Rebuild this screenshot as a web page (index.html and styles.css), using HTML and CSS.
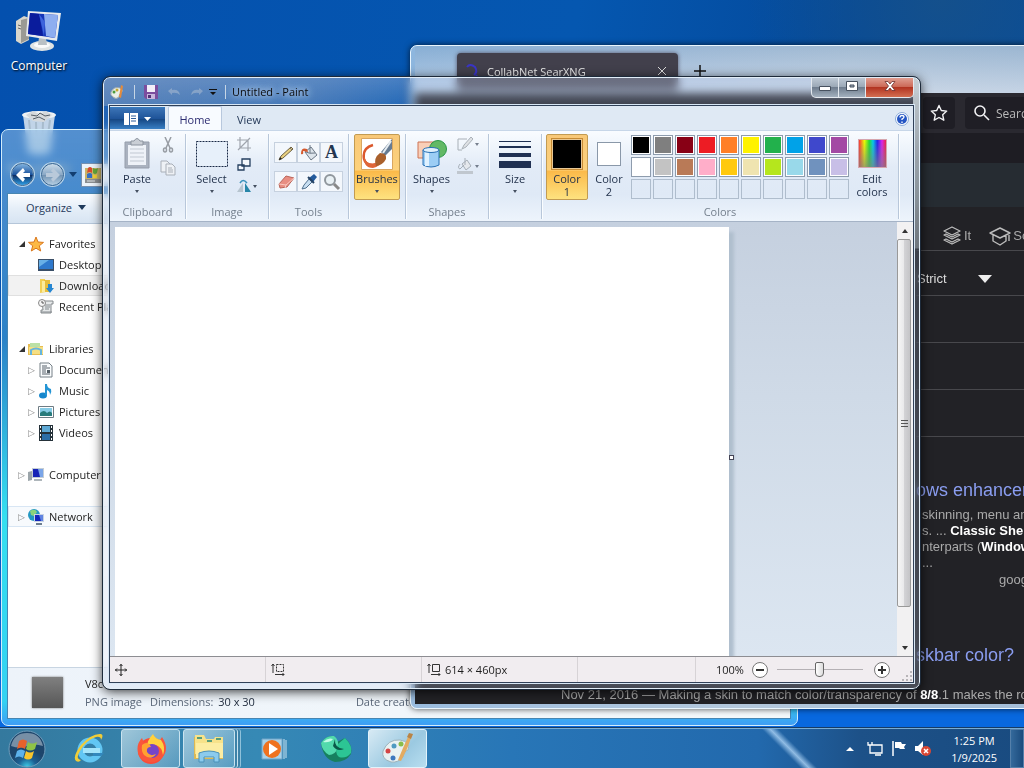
FILE: index.html
```html
<!DOCTYPE html>
<html lang="en">
<head>
    <meta charset="UTF-8">
    <meta name="viewport" content="width=device-width, initial-scale=1.0">
    <title>Desktop</title>
    <link rel="stylesheet" href="styles.css">
</head>
<body>

<main class="desktop">
    <div class="desktop-icons">
        <button class="desktop-icon">
            <svg width="48" height="44" viewBox="0 0 48 44"><path d="M1 12l8-5 5 2v22l-8 4-5-3z" fill="#d8d6cc"/><path d="M6 11v23l8-4V9z" fill="#9a9a94"/><path d="M3 16l3 1M3 19l3 1" stroke="#666"/><ellipse cx="27" cy="37" rx="12" ry="5" fill="#dfe3e3"/><ellipse cx="27" cy="36" rx="8" ry="3" fill="#fafafa"/><path d="M24 28l7 1 1 7h-9z" fill="#b9c0c4"/><path d="M13 2l33 2-4 28-31-5z" fill="#e8ebee"/><path d="M15 4l28 2-3 23-27-4z" fill="#1536b8"/><path d="M29 5l14 1-3 23-9-2z" fill="#8eaef0"/><path d="M15 4l9 1 4 22-15-2z" fill="#0a1c9c"/><path d="M24 5l6 8-1 14z" fill="#3d63dc"/></svg>
            <span>Computer</span>
        </button>
        <button class="desktop-icon">
            <svg width="40" height="46" viewBox="0 0 40 46"><path d="M4 5l32 0-5 38q-11 4-22 0z" fill="#d6e2ee" opacity=".9"/><path d="M10 10l3 30M17 12l1 31M24 12l-1 30M31 10l-4 30" stroke="#a8bccd" stroke-width="2"/><ellipse cx="20" cy="5" rx="17" ry="4" fill="#eef2f5"/><path d="M7 5l7-4 6 3 7-3 6 4-8 7-11-1z" fill="#d5d9dc"/><path d="M12 5l6 1 3-3 5 3 5-1M14 9l6-2 6 3" stroke="#555e66" fill="none"/></svg>
            <span>Recycle Bin</span>
        </button>
    </div>

    <section class="window explorer">
        <nav class="explorer-nav">
            <button class="round-button back" aria-label="Back"><svg width="16" height="14" viewBox="0 0 16 14"><path d="M8 0L1 7l7 7 2-3-2-2h7V5H8l2-2z" fill="#fff"/></svg></button>
            <button class="round-button forward" aria-label="Forward"><svg width="16" height="14" viewBox="0 0 16 14"><path d="M8 0l7 7-7 7-2-3 2-2H1V5h7L6 3z" fill="#b9c9da"/></svg></button>
            <button class="history" aria-label="Recent pages"><svg width="8" height="5" viewBox="0 0 8 5"><path d="M0 0h8L4 5z" fill="#123e70"/></svg></button>
            <div class="address">
                <svg width="18" height="18" viewBox="0 0 18 18"><path d="M1 2h16v14H1z" fill="#c9b468"/><path d="M4 2q2-2 4 0v5q-2-2-5 0z" fill="#d84b2c"/><path d="M9 2q3 2 5 0l-1 5q-2 2-4 0z" fill="#62a63c"/><path d="M3 8q3-2 5 0v4H3z" fill="#356fc4"/><path d="M9 8q2 2 4 0v4H9z" fill="#f1d236"/><path d="M1 13h16v4H1z" fill="#8b8f92"/><path d="M3 15h8" stroke="#dfe3e5"/></svg>
            </div>
        </nav>
        <div class="explorer-content">
            <div class="explorer-toolbar"><button>Organize <svg width="8" height="5" viewBox="0 0 8 5"><path d="M0 0h8L4 5z" fill="#1e395b"/></svg></button></div>
            <ul class="tree">
                <li class="root"><i class="open"></i><svg width="16" height="16" viewBox="0 0 16 16"><path d="M8 1l2 5 5.500.4-4.200 3.400 1.400 5.200L8 12.200 3.300 15l1.400-5.200L.5 6.400 6 6z" fill="#fdb944" stroke="#d9771c"/></svg>Favorites</li>
                <li><i></i><svg width="16" height="16" viewBox="0 0 16 16"><path d="M0 2h16v12H0z" fill="#3b4f67"/><path d="M1 3h14v9H1z" fill="#2f79cc"/><path d="M1 3h10L1 10z" fill="#69b0e6"/></svg>Desktop</li>
                <li class="selected"><i></i><svg width="16" height="16" viewBox="0 0 16 16"><path d="M2 1h5l1 13-6 1z" fill="#f2cf55"/><path d="M6 2h6v12H6z" fill="#e7bd3c"/><path d="M4 3h3v11H4z" fill="#fbeb9c"/><path d="M10 6h4v4h2l-4 5-4-5h2z" fill="#2686d2"/></svg>Downloads</li>
                <li><i></i><svg width="16" height="16" viewBox="0 0 16 16"><path d="M4 2h11v3h-2v9H3v-3h2z" fill="#e5e8e9" stroke="#84898c"/><path d="M7 6h5M7 8h5M7 10h4M3 13h11" stroke="#858b8f"/><circle cx="4" cy="4" r="3.500" fill="#f5f5f5" stroke="#888"/><path d="M4 2v2h2" stroke="#555" fill="none"/></svg>Recent Places</li>
                <li class="root gap"><i class="open"></i><svg width="16" height="16" viewBox="0 0 16 16"><path d="M0 3h5l1 2h9v9H0z" fill="#e7bd51"/><path d="M2 2h10v7H2z" fill="#bce1a5"/><path d="M1 6h14v7H1z" fill="#f6df83"/><path d="M3 14V9q5-3 10 0v5" fill="none" stroke="#66b5dd" stroke-width="2"/></svg>Libraries</li>
                <li><i class="closed"></i><svg width="16" height="16" viewBox="0 0 16 16"><path d="M2 1h9l3 3v11H2z" fill="#fafcfd" stroke="#768087"/><path d="M4 4h5M4 6h8M4 8h4M4 10h4M4 12h8" stroke="#56616a"/><path d="M9 8h3v3H9z" fill="#555f66"/></svg>Documents</li>
                <li><i class="closed"></i><svg width="16" height="16" viewBox="0 0 16 16"><ellipse cx="5" cy="12.500" rx="4" ry="3" fill="#1687cd"/><path d="M7 12V1h2q0 4 4 5 1 3-1 6 0-4-3-5v6" fill="#2495d5"/></svg>Music</li>
                <li><i class="closed"></i><svg width="16" height="16" viewBox="0 0 16 16"><path d="M.5 2.500h15v11H.5z" fill="#fff" stroke="#6e7c84"/><path d="M2 4h12v8H2z" fill="#88cce6"/><path d="M2 9q4-4 7 0 3-3 5 0v3H2z" fill="#287b7b"/></svg>Pictures</li>
                <li><i class="closed"></i><svg width="16" height="16" viewBox="0 0 16 16"><path d="M1 0h14v16H1z" fill="#253139"/><path d="M4 1h8v6H4z" fill="#5ea9d5"/><path d="M4 9h8v6H4z" fill="#2c6ea7"/><path d="M2.500 1v14M13.500 1v14" stroke="#fff" stroke-dasharray="2 2"/></svg>Videos</li>
                <li class="root gap"><i class="closed"></i><svg width="16" height="16" viewBox="0 0 16 16"><path d="M0 5l4-1v9l-4 1z" fill="#9ca5aa"/><path d="M4 1h12v10H4z" fill="#c4cdd5"/><path d="M5 2h10v8H5z" fill="#1724b6"/><path d="M10 2h5v8h-3z" fill="#7aa5e8"/><path d="M6 12h8v2H6z" fill="#aeb6bb"/></svg>Computer</li>
                <li class="root gap hover"><i class="closed"></i><svg width="16" height="16" viewBox="0 0 16 16"><circle cx="6" cy="6" r="6" fill="#2498c3"/><path d="M2 2q5-3 7 1L6 7 3 6z" fill="#8bd37b"/><path d="M6 5h10v8H6z" fill="#c8d3e3"/><path d="M7 6h8v6H7z" fill="#1426bd"/><path d="M11 6h4v6h-2z" fill="#6084e2"/><path d="M8 14h6v2H8z" fill="#6c7d90"/></svg>Network</li>
            </ul>
            <footer class="details">
                <div class="thumb"></div>
                <div class="details-text">
                    <div class="file-name">V8c</div>
                    <div class="file-meta"><span>PNG image</span><span>Dimensions: <b>30 x 30</b></span><span class="date">Date created:</span></div>
                </div>
            </footer>
        </div>
    </section>

    <section class="window firefox">
        <header class="tab-bar">
            <div class="browser-tab">
                <svg width="16" height="16" viewBox="0 0 16 16" fill="none" stroke="#3a35c6" stroke-width="2"><path d="M3 4q3-4 8 0 3 5-1 8M12 12l2 3"/></svg>
                <span>CollabNet SearXNG</span>
                <button aria-label="Close tab"><svg width="10" height="10" viewBox="0 0 10 10"><path d="M1 1l8 8M9 1L1 9" stroke="#ddd"/></svg></button>
            </div>
            <button class="new-tab" aria-label="New tab"><svg width="12" height="12" viewBox="0 0 12 12"><path d="M6 0v12M0 6h12" stroke="#111" stroke-width="1.500"/></svg></button>
        </header>
        <div class="nav-bar">
            <button class="star" aria-label="Bookmark"><svg width="18" height="18" viewBox="0 0 18 18"><path d="M9 1.500l2.300 5 5.400.6-4 3.700 1.100 5.400L9 13.500l-4.800 2.700 1.100-5.400-4-3.700 5.400-.6z" fill="none" stroke="#f2f2f4" stroke-width="1.400" stroke-linejoin="round"/></svg></button>
            <label class="search-box"><svg width="16" height="16" viewBox="0 0 16 16" fill="none" stroke="#f2f2f4" stroke-width="1.600"><circle cx="6" cy="6" r="5"/><path d="M10 10l5 5"/></svg><input type="text" placeholder="Search" aria-label="Search"></label>
        </div>
        <div class="bookmarks"></div>
        <div class="page-head"></div>
        <div class="page">
            <div class="categories">
                <a href="#"><svg width="20" height="20" viewBox="0 0 20 20" fill="none" stroke="#bbb" stroke-width="1.300" stroke-linejoin="round"><path d="M10 1l8 4-8 4-8-4zM2 9l2-1 6 3 6-3 2 1-8 4zM2 14l2-1 6 3 6-3 2 1-8 4z"/></svg>It</a>
                <a href="#"><svg width="22" height="20" viewBox="0 0 22 20" fill="none" stroke="#bbb" stroke-width="1.400" stroke-linejoin="round"><path d="M11 2l10 5-10 5L1 7zM4 9v6l7 4 6-4V9M20 7v8"/></svg>Science</a>
            </div>
            <div class="filter">Strict <svg width="14" height="8" viewBox="0 0 14 8"><path d="M0 0h14L7 8z" fill="#eee"/></svg></div>
            <div class="rule"></div>
            <div class="rule"></div>
            <div class="rule"></div>
            <article class="result first">
                <h3><a href="#">ows enhancement</a></h3>
                <p>skinning, menu and</p>
                <p>s. ... <b>Classic Shell</b></p>
                <p>nterparts (<b>Windows</b></p>
                <p>...</p>
                <p class="engine">google</p>
            </article>
            <article class="result">
                <h3><a href="#">skbar color?</a></h3>
                <p class="long">Nov 21, 2016 — Making a skin to match color/transparency of <b>8/8</b>.1 makes the root</p>
            </article>
        </div>
    </section>

    <section class="window paint">
        <header class="title-bar">
            <div class="quick-access">
                <svg width="16" height="16" viewBox="0 0 16 16"><path d="M2 8q3-6 9-4 4 2 1 5-2 1-2 4-3 3-6 0-3-2-2-5z" fill="#e9efe8" stroke="#9ba8ac"/><circle cx="5" cy="8" r="1.500" fill="#4b9b3e"/><circle cx="8" cy="6" r="1.500" fill="#c8a830"/><path d="M12 1l2 1-2 12-2-1z" fill="#e48b3c"/></svg>
                <i></i>
                <button class="save" aria-label="Save"><svg width="14" height="14" viewBox="0 0 14 14"><path d="M0 0h14v14H2l-2-2z" fill="#7c4e9e"/><path d="M3 0h8v7H3z" fill="#f2eef8"/><path d="M3 9h8v5H3z" fill="#c9b6dc"/><path d="M4 10h3v3H4z" fill="#533276"/></svg></button>
                <button class="faded" aria-label="Undo"><svg width="14" height="10" viewBox="0 0 14 10"><path d="M1 4l4-3v2q7-1 8 5-3-3-8-2v2z" fill="#b4c2d4"/></svg></button>
                <button class="faded" aria-label="Redo"><svg width="14" height="10" viewBox="0 0 14 10"><path d="M13 4L9 1v2Q2 2 1 8q3-3 8-2v2z" fill="#b4c2d4"/></svg></button>
                <button class="customize" aria-label="Customize toolbar"><svg width="8" height="8" viewBox="0 0 8 8"><path d="M0 1h8v1H0zM1 4h6L4 7z" fill="#111"/></svg></button>
                <i></i>
            </div>
            <h1>Untitled - Paint</h1>
            <div class="window-buttons">
                <button aria-label="Minimize"><svg width="12" height="12" viewBox="0 0 12 12"><path d="M.5 6.500h11v4H.5z" fill="#fff" stroke="#47515f"/></svg></button>
                <button aria-label="Maximize"><svg width="12" height="12" viewBox="0 0 12 12"><path d="M.5 1.500h11v9H.5zM4 5v2h4V5z" fill="#fff" fill-rule="evenodd" stroke="#47515f"/></svg></button>
                <button class="close" aria-label="Close"><svg width="12" height="12" viewBox="0 0 12 12"><path d="M1 1.500h3L6 4l2-2.500h3L7.500 6l3.500 4.500H8L6 8l-2 2.500H1L4.500 6z" fill="#fff" stroke="#6b2d2d" stroke-width=".8"/></svg></button>
            </div>
        </header>
        <div class="paint-content">
            <nav class="ribbon-tabs">
                <button class="file-menu" aria-label="Paint menu"><svg width="14" height="12" viewBox="0 0 14 12"><path d="M0 0h14v12H0z" fill="#fff"/><path d="M5.500 0v12" stroke="#2d5d9b"/><path d="M7 3h5M7 5.500h5M7 8h5" stroke="#2d5d9b"/></svg><svg width="7" height="4" viewBox="0 0 7 4"><path d="M0 0h7L3.500 4z" fill="#fff"/></svg></button>
                <button class="active">Home</button>
                <button>View</button>
                <button class="help" aria-label="Help"><svg width="14" height="14" viewBox="0 0 14 14"><circle cx="7" cy="7" r="6.500" fill="#fff" stroke="#8aaad8"/><circle cx="7" cy="7" r="5" fill="#2556c4"/><path d="M5 5.500q0-2 2-2t2 1.600q0 1-2 2V8M7 9.500v1.500" stroke="#fff" stroke-width="1.300" fill="none"/></svg></button>
            </nav>
            <div class="ribbon">
                <div class="group clipboard">
                    <div class="tools-row">
                        <button class="big"><span class="art"><svg width="26" height="31" viewBox="0 0 26 31"><path d="M1 4h24v26H1z" fill="#aab2bf" stroke="#959dab"/><path d="M4 7h18v20H4z" fill="#eef2f8"/><path d="M6 11h14M6 15h14M6 19h14M6 23h14" stroke="#c1c8d2"/><path d="M7 3h3q3-5 6 0h3v4H7z" fill="#c9ced5" stroke="#8b939e"/></svg></span>Paste<i class="drop"></i></button>
                        <div class="small-col">
                            <button aria-label="Cut"><svg width="14" height="16" viewBox="0 0 14 16" fill="none" stroke="#989da4" stroke-width="1.500"><path d="M4 0l5 11M10 0L5 11"/><ellipse cx="4" cy="13" rx="1.500" ry="2"/><ellipse cx="10" cy="13" rx="1.500" ry="2"/></svg></button>
                            <button aria-label="Copy"><svg width="16" height="16" viewBox="0 0 16 16" fill="#eef1f5" stroke="#a9afb8"><path d="M1 1h6l3 3v8H1z"/><path d="M6 4h6l3 3v8H6zM8 8h4M8 10h5M8 12h5"/></svg></button>
                        </div>
                    </div>
                    <span class="group-label">Clipboard</span>
                </div>
                <div class="group image">
                    <div class="tools-row">
                        <button class="big"><span class="art"><svg width="32" height="26" viewBox="0 0 32 26"><path d="M.5.500h31v25H.5z" fill="#e7f0fa" stroke="#182845" stroke-dasharray="2 1"/></svg></span>Select<i class="drop"></i></button>
                        <div class="small-col three">
                            <button aria-label="Crop"><svg width="14" height="14" viewBox="0 0 14 14" fill="none" stroke="#a0a5ad" stroke-width="1.200"><path d="M3 0v11h11M0 3h11v11M1 13L13 1"/></svg></button>
                            <button aria-label="Resize"><svg width="14" height="14" viewBox="0 0 14 14" fill="#f4f8fc" stroke="#253f5f" stroke-width="1.300"><path d="M5 1h8v7H5zM1 7h6v5H1z"/></svg></button>
                            <button class="rotate" aria-label="Rotate"><svg width="14" height="14" viewBox="0 0 14 14"><path d="M6 4v9H0z" fill="#b6c4cf"/><path d="M8 4l6 9H8z" fill="#2685a8"/><path d="M3 4q3-5 7 0" fill="none" stroke="#3a91bb" stroke-width="1.500"/></svg><i class="drop"></i></button>
                        </div>
                    </div>
                    <span class="group-label">Image</span>
                </div>
                <div class="group tools">
                    <div class="tool-grid">
                        <button aria-label="Pencil"><svg width="18" height="18" viewBox="0 0 18 18"><path d="M2 16l2-4 10-9 2 2-10 9z" fill="#e9d080" stroke="#6d6144"/><path d="M2 16l1-3 2 2z" fill="#222"/><path d="M13 4l2 2" stroke="#777"/></svg></button>
                        <button aria-label="Fill"><svg width="18" height="18" viewBox="0 0 18 18"><path d="M5 8l6-5 6 8-6 5z" fill="#dce4eb" stroke="#6c7886"/><path d="M10 9V1M6 8q3 2 9 1" fill="none" stroke="#6c7886"/><path d="M7 5q-6-2-6 5 3 1 2-3l5 1z" fill="#d5592d"/></svg></button>
                        <button class="text-tool" aria-label="Text">A</button>
                        <button aria-label="Eraser"><svg width="18" height="18" viewBox="0 0 18 18"><path d="M2 11l7-8 8 2-7 9-7 1z" fill="#e88e82" stroke="#b96459"/><path d="M2 11l7 1 8-7M9 12l-1 3" fill="none" stroke="#fac9bf"/></svg></button>
                        <button aria-label="Color picker"><svg width="18" height="18" viewBox="0 0 18 18"><path d="M2 16l2-4 5-6 3 3-6 6z" fill="#c7def1" stroke="#51718f"/><path d="M9 5l5-4 3 3-4 5z" fill="#245b9c"/><path d="M8 4l6 6" stroke="#244264" stroke-width="2"/></svg></button>
                        <button aria-label="Magnifier"><svg width="18" height="18" viewBox="0 0 18 18"><circle cx="7" cy="7" r="5" fill="#e9f1f5" stroke="#90979d" stroke-width="2"/><path d="M11 11l5 5" stroke="#888" stroke-width="3"/></svg></button>
                    </div>
                    <span class="group-label">Tools</span>
                </div>
                <div class="group brushes">
                    <button class="big selected"><span class="art"><svg width="32" height="32" viewBox="0 0 32 32"><path d="M.5.500h31v31H.5z" fill="#fff" stroke="#d9a661"/><path d="M12 7Q1 10 3 21q2 8 14 5" fill="none" stroke="#db582c" stroke-width="2.500"/><path d="M3 18q2 8 9 8l10-5q-3 8-10 9Q2 30 3 18" fill="#df6639"/><path d="M31 1v10l-7 7-4-4z" fill="#667b92"/><path d="M30 3l-8 12" stroke="#e7edf2" stroke-width="2"/><path d="M19 15q7 0 6 6-3 6-10 7-3-8 4-13z" fill="#a9602c"/></svg></span>Brushes<i class="drop"></i></button>
                </div>
                <div class="group shapes">
                    <div class="tools-row">
                        <button class="big"><span class="art"><svg width="32" height="30" viewBox="0 0 32 30"><path d="M2 3h17v16H2z" fill="#f9cfb8" stroke="#ce7555"/><circle cx="22" cy="10" r="8.500" fill="#62b965" stroke="#299647"/><path d="M7 11v15q8 4 16 0V11z" fill="#9ccdf5" stroke="#2970b4"/><path d="M11 13v14" stroke="#dff1ff" stroke-width="4"/><ellipse cx="15" cy="11" rx="8" ry="2.500" fill="#dff0fc" stroke="#2970b4"/></svg></span>Shapes<i class="drop"></i></button>
                        <div class="small-col">
                            <button class="dim" aria-label="Outline"><svg width="16" height="14" viewBox="0 0 16 14"><path d="M1 2h9M1 2v11h4" fill="none" stroke="#8b939b"/><path d="M5 12l2-4 7-8 2 2-7 8z" fill="#d6d9db" stroke="#8b939b"/></svg><i class="drop"></i></button>
                            <button class="dim" aria-label="Fill style"><svg width="16" height="16" viewBox="0 0 16 16"><path d="M5 6l5-4 4 6-5 4z" fill="#e5e7e9" stroke="#8b939b"/><path d="M3 6q-3 4 0 5l4-4M8 7V0" fill="none" stroke="#8b939b"/><path d="M0 13h16v3H0z" fill="#b2b8be"/></svg><i class="drop"></i></button>
                        </div>
                    </div>
                    <span class="group-label">Shapes</span>
                </div>
                <div class="group size">
                    <button class="big"><span class="art"><svg width="32" height="28" viewBox="0 0 32 28"><path d="M0 1h32v1H0zM0 6h32v2H0zM0 13h32v4H0zM0 21h32v7H0z" fill="#203153"/></svg></span>Size<i class="drop"></i></button>
                </div>
                <div class="group colors">
                    <div class="tools-row">
                        <button class="big color-choice selected"><span class="art"><b class="swatch-one"></b></span><span>Color<br>1</span></button>
                        <button class="big color-choice"><span class="art"><b class="swatch-two"></b></span><span>Color<br>2</span></button>
                        <div class="palette">
                            <button class="c-black" aria-label="Black"></button><button class="c-gray" aria-label="Gray"></button><button class="c-darkred" aria-label="Dark red"></button><button class="c-red" aria-label="Red"></button><button class="c-orange" aria-label="Orange"></button><button class="c-yellow" aria-label="Yellow"></button><button class="c-green" aria-label="Green"></button><button class="c-turquoise" aria-label="Turquoise"></button><button class="c-indigo" aria-label="Indigo"></button><button class="c-purple" aria-label="Purple"></button>
                            <button class="c-white" aria-label="White"></button><button class="c-lightgray" aria-label="Light gray"></button><button class="c-brown" aria-label="Brown"></button><button class="c-rose" aria-label="Rose"></button><button class="c-gold" aria-label="Gold"></button><button class="c-lightyellow" aria-label="Light yellow"></button><button class="c-lime" aria-label="Lime"></button><button class="c-lightblue" aria-label="Light turquoise"></button><button class="c-bluegray" aria-label="Blue gray"></button><button class="c-lavender" aria-label="Lavender"></button>
                            <button class="empty" aria-label="Custom 1"></button><button class="empty" aria-label="Custom 2"></button><button class="empty" aria-label="Custom 3"></button><button class="empty" aria-label="Custom 4"></button><button class="empty" aria-label="Custom 5"></button><button class="empty" aria-label="Custom 6"></button><button class="empty" aria-label="Custom 7"></button><button class="empty" aria-label="Custom 8"></button><button class="empty" aria-label="Custom 9"></button><button class="empty" aria-label="Custom 10"></button>
                        </div>
                        <button class="big edit-colors"><span class="art"><b class="rainbow"></b></span><span>Edit<br>colors</span></button>
                    </div>
                    <span class="group-label">Colors</span>
                </div>
            </div>
            <div class="workspace">
                <div class="canvas-area"><div class="canvas"><span class="handle"></span></div></div>
                <div class="scrollbar">
                    <button aria-label="Scroll up"><svg width="6" height="4" viewBox="0 0 6 4"><path d="M0 4h6L3 0z" fill="#333"/></svg></button>
                    <div class="scroll-thumb"><i></i><i></i><i></i></div>
                    <button aria-label="Scroll down"><svg width="6" height="4" viewBox="0 0 6 4"><path d="M0 0h6L3 4z" fill="#333"/></svg></button>
                </div>
            </div>
            <footer class="status-bar">
                <div><svg width="12" height="12" viewBox="0 0 12 12" fill="none" stroke="#222"><path d="M6 0v12M0 6h12M4.500 2L6 .5 7.500 2M4.500 10L6 11.500 7.500 10M2 4.500L.5 6 2 7.500M10 4.500L11.500 6 10 7.500"/></svg></div>
                <div><svg width="14" height="13" viewBox="0 0 14 13" fill="none" stroke="#333"><path d="M2 10V1M.5 3L2 1l1.500 2M4 11.500h9M11.500 10l1.500 1.500-1.500 1.500"/><path d="M5.500 1.500h7v7h-7z" stroke-dasharray="2 1"/></svg></div>
                <div><svg width="14" height="13" viewBox="0 0 14 13" fill="none" stroke="#333"><path d="M2 10V1M.5 3L2 1l1.500 2M4 11.500h9M11.500 10l1.500 1.500-1.500 1.500M5.500 1.500h7v7h-7z"/></svg>614 × 460px</div>
                <div></div>
                <div class="zoom">100%
                    <button aria-label="Zoom out"><svg width="16" height="16" viewBox="0 0 16 16" fill="#fff" stroke="#777"><circle cx="8" cy="8" r="7.500"/><path d="M4 8h8" stroke="#333" stroke-width="2"/></svg></button>
                    <input type="range" min="0" max="100" value="50" aria-label="Zoom">
                    <button aria-label="Zoom in"><svg width="16" height="16" viewBox="0 0 16 16" fill="#fff" stroke="#777"><circle cx="8" cy="8" r="7.500"/><path d="M4 8h8M8 4v8" stroke="#333" stroke-width="2"/></svg></button>
                    <svg class="grip" width="12" height="12" viewBox="0 0 12 12" fill="#b8b5b8"><path d="M9 1h2v2H9zM5 5h2v2H5zM9 5h2v2H9zM1 9h2v2H1zM5 9h2v2H5zM9 9h2v2H9z"/></svg>
                </div>
            </footer>
        </div>
    </section>
</main>

<footer class="taskbar">
    <button class="start" aria-label="Start"><svg width="38" height="38" viewBox="0 0 38 38"><defs><radialGradient id="orb" cx=".5" cy="1"><stop offset="0" stop-color="#3ed0ea"/><stop offset=".5" stop-color="#1c6093"/><stop offset="1" stop-color="#1d456b"/></radialGradient></defs><circle cx="19" cy="19" r="18" fill="url(#orb)" stroke="#6f9dbb"/><path d="M3 16Q6 3 19 3t16 13q-9-3-16 0t-16 0" fill="#fff" opacity=".4"/><path d="M11 11q4-3 8 0l-2 8q-4-3-8 0z" fill="#e8622c"/><path d="M20 12q4 3 9 0l-2 7q-5 3-9 0z" fill="#8fc347"/><path d="M9 21q4-3 8 0l-2 7q-4-3-8 0z" fill="#5db1eb"/><path d="M18 21q4 3 8 0l-2 7q-4 3-8 0z" fill="#fac52c"/></svg></button>
    <button class="task" aria-label="Internet Explorer"><svg width="32" height="32" viewBox="0 0 32 32"><circle cx="17" cy="17" r="9.500" fill="none" stroke="#62c6f3" stroke-width="6"/><path d="M10 15h17v5H10z" fill="#a4e4fa"/><path d="M20 20h11l-3 3h-8z" fill="#3388bd"/><path d="M3 28Q-1 24 8 12 19 0 28 1q3 1 0 6 0-4-5-3Q13 7 7 18 2 26 8 27q-2 3-5 1" fill="#f0cd38"/></svg></button>
    <button class="task running" aria-label="Firefox"><svg width="32" height="32" viewBox="0 0 32 32"><circle cx="16" cy="18" r="13" fill="#fb4b38"/><path d="M3 20Q1 11 7 5l2 5q5-2 9-8 2 4 7 5l2-3q8 12 0 21-8 7-17 3-6-3-7-8" fill="#f9563c"/><path d="M18 1q2 5 8 6 5 7 2 15-1-8-7-10-7-2-9 3Q12 7 18 1" fill="#ffd23e"/><circle cx="17" cy="18" r="7" fill="#7646c7"/><path d="M7 12q6-5 9 2-5 0-4 5 3 5 9 2-5 7-12 1-3-4-2-10" fill="#ffa130"/></svg></button>
    <button class="task running stacked" aria-label="Explorer"><svg width="34" height="30" viewBox="0 0 34 30"><path d="M2 3h9l2 2h18v20H2z" fill="#dcb854"/><path d="M3 1h9l2 4h8l1-2h8v17H3z" fill="#f7e28a"/><path d="M4 9h27v15H4z" fill="#fceda3"/><path d="M5 4h5M15 7h5M24 5h5" stroke="#579d7b" stroke-width="2"/><path d="M7 28v-9q10-4 20 0v9h-5v-5H12v5z" fill="#8ccbed" stroke="#4b91b9"/></svg></button>
    <button class="task" aria-label="Media Player"><svg width="26" height="26" viewBox="0 0 26 26"><path d="M1 3h20v20H1z" fill="#a7d2ea" stroke="#72a4c6"/><path d="M23 3v20M25 4v18" stroke="#c9e2f1"/><circle cx="11" cy="13" r="9" fill="#ef721f"/><path d="M8 7l9 6-9 6z" fill="#fff"/></svg></button>
    <button class="task" aria-label="Shell"><svg width="34" height="30" viewBox="0 0 34 30"><path d="M2 9Q7 1 15 2l3 6 8-4q8 7 6 16-5 8-16 8Q4 25 2 9" fill="#17805f"/><path d="M2 9Q7 1 15 2q5 3 4 12-3 7-9 7Q3 17 2 9" fill="#52d9ac"/><path d="M4 8q5-5 10-3-3 4-10 3" fill="#c2fae6"/><path d="M19 10l7-6q8 8 6 15-5 6-12 4-5-4-1-13" fill="#2cc594"/><path d="M16 5q-1 9 9 10-7 3-11-3z" fill="#0b5849"/></svg></button>
    <button class="task active" aria-label="Paint"><svg width="34" height="32" viewBox="0 0 34 32"><path d="M2 18Q7 6 19 7q11 2 8 10-4 1-5 7-5 6-12 5Q0 26 2 18" fill="#e8f1f2" stroke="#9eb3bb"/><circle cx="7" cy="18" r="2.500" fill="#d44545"/><circle cx="13" cy="13" r="2.500" fill="#4e9ac1"/><circle cx="20" cy="11" r="2.500" fill="#8bbd49"/><circle cx="12" cy="25" r="2.500" fill="#3c77be"/><path d="M27 4l3 1-4 11-6 12-3-1 5-12z" fill="#e3ab61"/><path d="M26 4l4 2 2-5-4-1z" fill="#b98446"/></svg></button>
    <div class="tray">
        <button aria-label="Show hidden icons"><svg width="8" height="4" viewBox="0 0 8 4"><path d="M0 4h8L4 0z" fill="#fff"/></svg></button>
        <button class="network" aria-label="Network"><svg width="16" height="14" viewBox="0 0 16 14" fill="none" stroke="#fff" stroke-width="1.300"><path d="M5 3h10v8H6M8 13h6M1 0v3h4V0M3 3v8h3"/></svg></button>
        <button aria-label="Action Center"><svg width="14" height="15" viewBox="0 0 14 15"><path d="M1 0v15" stroke="#fff" stroke-width="1.500"/><path d="M3 1h6l1 2h4l-2 3 1 2H8L7 7H3z" fill="#fff"/></svg></button>
        <button aria-label="Volume"><svg width="16" height="16" viewBox="0 0 16 16"><path d="M0 5h3l5-5v14L3 10H0z" fill="#fff"/><circle cx="11" cy="10" r="5" fill="#d94734"/><path d="M9 8l4 4M13 8l-4 4" stroke="#fff" stroke-width="1.500"/></svg></button>
        <button class="clock">1:25 PM<br>1/9/2025</button>
        <button class="show-desktop" aria-label="Show desktop"></button>
    </div>
</footer>

</body>
</html>
```

FILE: styles.css
```css
* {
    box-sizing: border-box;
}

body {
    margin: 0;
    height: 100vh;
    display: flex;
    flex-direction: column;
    overflow: hidden;
    font-family: "Open Sans", "Noto Sans", sans-serif;
    font-size: 11px;
    line-height: 13px;
    color: #1e1e1e;
    background: radial-gradient(circle at 92% 0, #14508c 0, rgba(20, 80, 140, 0) 16%), linear-gradient(100deg, #0450ae 0, #0557b0 50%, #04499a 75%, #0b4f98 100%);
}

button {
    font: inherit;
    color: inherit;
    padding: 0;
    border: none;
    background: none;
}

svg {
    display: block;
    flex: none;
}

.desktop {
    flex: 1;
    position: relative;
    overflow: hidden;
    background: linear-gradient(rgba(8, 104, 222, 0) 60%, #0868de 95%);
}

.desktop-icons {
    display: flex;
    flex-direction: column;
    align-items: flex-start;
    gap: 38px;
    padding: 9px 0 0 2px;
}

.desktop-icon {
    width: 74px;
    display: flex;
    flex-direction: column;
    align-items: center;
    gap: 6px;
    color: #fff;
    text-shadow: 1px 1px 2px #000;
}

.desktop-icon span {
    font-size: 12px;
}

/* Windows */
.window {
    position: absolute;
    display: flex;
    flex-direction: column;
    border-radius: 7px;
    overflow: hidden;
    backdrop-filter: blur(4px);
}

.explorer {
    left: 1px;
    top: 129px;
    bottom: 2px;
    width: 797px;
    padding: 0 6px 6px 5px;
    border: 1px solid #d3edfb;
    background: linear-gradient(rgba(150, 195, 235, 0.55), rgba(60, 150, 210, 0.7) 35%, #35dff0 65%, #33d2f2 96%, #3e9df4 100%);
}

.explorer-nav {
    height: 63px;
    display: flex;
    align-items: center;
    gap: 4px;
    padding: 26px 0 0 2px;
}

.round-button {
    width: 25px;
    height: 25px;
    border-radius: 50%;
    border: 2px solid #b8d4ea;
    outline: 1px solid #33608d;
    outline-offset: -2px;
    display: flex;
    align-items: center;
    justify-content: center;
    margin-left: 1px;
}

.back {
    background: linear-gradient(#7fb2e0, #1b539c 50%, #0b285d 52%, #2c9de4);
}

.forward {
    background: linear-gradient(#cbdcea, #8ba9c6 50%, #6f90b0 52%, #b5cfe3);
}

.address {
    flex: 1;
    height: 24px;
    padding: 2px;
    border: 1px solid #7590b0;
    background: #ecf3fa;
}

.explorer-content {
    flex: 1;
    display: flex;
    flex-direction: column;
    background: #fff;
    border: 1px solid #4785b1;
}

.explorer-toolbar {
    height: 30px;
    display: flex;
    align-items: center;
    padding: 0 0 2px 18px;
    background: linear-gradient(#fbfdff, #e5eef8 50%, #d7e4f2);
    border-bottom: 1px solid #b5c6d9;
    color: #1e395b;
}

.explorer-toolbar button {
    display: flex;
    align-items: center;
    gap: 6px;
}

.tree {
    flex: 1;
    list-style: none;
    margin: 0;
    padding: 9px 0 0;
}

.tree li {
    width: 180px;
    height: 21px;
    display: flex;
    align-items: center;
    padding-left: 18px;
    border: 1px solid transparent;
    white-space: nowrap;
}

.tree li svg {
    margin: 0 5px 0 2px;
}

.tree li.root {
    padding-left: 8px;
}

.tree li.gap {
    margin-top: 21px;
}

.tree li i {
    width: 9px;
    display: flex;
    justify-content: center;
}

.tree li .closed::before {
    content: "▷";
    font: 9px "DejaVu Sans", sans-serif;
    color: #888;
}

.tree li .open::before {
    content: "";
    border-left: 6px solid transparent;
    border-bottom: 6px solid #333;
}

.tree li.selected {
    border-color: #e0e0e0;
    background: #f2f2f2;
}

.tree li.hover {
    border-color: #d8e6f4;
    background: #f7fafd;
}

.details {
    height: 51px;
    display: flex;
    align-items: center;
    gap: 22px;
    padding-left: 24px;
    border-top: 1px solid #c8d5e2;
    background: linear-gradient(90deg, #edf3fa, #f4f9fb);
}

.thumb {
    width: 31px;
    height: 31px;
    margin-bottom: 2px;
    background: linear-gradient(#808080, #565656);
    box-shadow: 0 0 2px #777;
}

.details-text {
    display: flex;
    flex-direction: column;
    gap: 5px;
    padding-bottom: 1px;
}

.file-meta {
    display: flex;
    gap: 8px;
    color: #5a6779;
    white-space: nowrap;
}

.file-meta b {
    font-weight: 400;
    color: #1e2a3c;
    margin-left: 2px;
}

.file-meta .date {
    margin-left: 93px;
}

/* Browser */
.firefox {
    left: 410px;
    right: -12px;
    top: 45px;
    bottom: 19px;
    padding: 0 4px 4px;
    border: 1px solid #e9f5fd;
    background: linear-gradient(100deg, #8db6de, #a5c1df 30%, #b4c8dc 60%, #a3bdd8);
    box-shadow: 0 0 6px rgba(0, 0, 0, 0.7);
}

.tab-bar {
    height: 47px;
    display: flex;
    align-items: flex-start;
    gap: 16px;
    padding: 7px 0 0 42px;
    background: linear-gradient(rgba(120, 155, 190, 0.3), rgba(225, 230, 240, 0.5));
}

.browser-tab {
    width: 221px;
    height: 36px;
    display: flex;
    align-items: center;
    gap: 7px;
    padding: 0 11px 0 7px;
    border-radius: 4px;
    background: #42404c;
    color: #eee;
    box-shadow: 0 0 4px #55546a;
}

.browser-tab span {
    flex: 1;
}

.new-tab {
    height: 36px;
}

.nav-bar {
    height: 40px;
    display: flex;
    align-items: center;
    justify-content: flex-end;
    gap: 10px;
    background: #2a2930;
}

.star {
    width: 32px;
    height: 32px;
    display: flex;
    align-items: center;
    justify-content: center;
    background: #1f1e25;
    border-radius: 4px;
}

.search-box {
    width: 66px;
    height: 32px;
    display: flex;
    align-items: center;
    gap: 6px;
    padding-left: 9px;
    background: #1f1e25;
    border-radius: 4px;
}

.search-box input {
    width: 60px;
    border: none;
    background: none;
    font: inherit;
    font-size: 12px;
    padding: 0;
}

.search-box input::placeholder {
    color: #bbb;
}

.bookmarks {
    height: 30px;
    background: #1e1d23;
}

.page-head {
    height: 44px;
    background: #262c32;
}

.page {
    flex: 1;
    padding-left: 501px;
    overflow: hidden;
    background: #222226;
    font-family: "Liberation Sans", Arial, sans-serif;
    font-size: 13px;
    line-height: 16px;
    color: #aaa;
    white-space: nowrap;
}

.page a {
    color: inherit;
    text-decoration: none;
}

.categories,
.filter,
.rule {
    border-bottom: 1px solid #48484c;
}

.categories {
    height: 44px;
    display: flex;
    align-items: center;
    gap: 18px;
    padding: 14px 0 0 26px;
}

.categories a {
    display: flex;
    align-items: center;
    gap: 2px;
}

.filter {
    height: 45px;
    display: flex;
    align-items: center;
    gap: 31px;
    padding: 12px 0 0 1px;
    color: #ddd;
}

.rule {
    height: 47px;
}

.result h3 {
    margin: 0 0 5px;
    font-size: 18px;
    font-weight: 400;
    line-height: 24px;
    color: #8a9df0;
}

.result p {
    margin: 0 0 0 6px;
}

.result b {
    color: #fff;
}

.result.first {
    height: 206px;
    padding-top: 41px;
}

.result p.engine {
    padding-top: 1px;
    margin-left: 83px;
}

.result p.long {
    margin: 20px 0 0 -355px;
}

/* Paint */
.paint {
    left: 103px;
    top: 77px;
    bottom: 39px;
    width: 817px;
    padding: 0 5px 5px;
    border: 1px solid #e2edf7;
    outline: 1px solid #1d2a3a;
    background: linear-gradient(#c3ccd2, rgba(160, 170, 175, 0.5) 170px, transparent 171px) right / 6px 100% no-repeat, linear-gradient(90deg, rgba(150, 165, 190, 0.45), rgba(150, 165, 190, 0.3) 210px, transparent 310px) 0 0 / 100% 28px no-repeat, linear-gradient(rgba(190, 205, 235, 0.35), rgba(150, 175, 210, 0.2) 28px, rgba(190, 205, 235, 0.25));
    box-shadow: 0 2px 12px rgba(0, 0, 0, 0.85);
}

.title-bar {
    height: 27px;
    flex: none;
    display: flex;
    align-items: center;
    gap: 3px;
}

.quick-access {
    display: flex;
    align-items: center;
    gap: 9px;
}

.quick-access i {
    width: 1px;
    height: 14px;
    background: #c6d5e5;
}

.quick-access .faded {
    opacity: 0.5;
}

.quick-access .customize {
    margin: 0 -1px 0 -4px;
}

.title-bar h1 {
    flex: 1;
    margin: 0;
    padding-left: 3px;
    font-size: 11px;
    font-weight: 400;
    color: #0c0c0c;
    text-shadow: 0 0 6px #d8e5f5, 0 0 10px #d8e5f5;
}

.window-buttons {
    align-self: flex-start;
    height: 20px;
    display: flex;
    border: 1px solid #e4e9ef;
    border-top: none;
    border-radius: 0 0 5px 5px;
    overflow: hidden;
    background: linear-gradient(#bdc8d4, #9ca9b7 45%, #6f7d8e 50%, #a3b0be);
}

.window-buttons button {
    width: 27px;
    display: flex;
    align-items: center;
    justify-content: center;
    padding-bottom: 3px;
    border-right: 1px solid #e4e9ef;
}

.window-buttons .close {
    width: 47px;
    border: none;
    background: linear-gradient(#e09e91, #cc6a58 45%, #b23421 50%, #d36e51);
}

.paint-content {
    flex: 1;
    display: flex;
    flex-direction: column;
    border: 1px solid #304057;
    outline: 1px solid #d8e7f5;
    background: #dfe9f5;
    overflow: hidden;
}

.ribbon-tabs {
    height: 24px;
    flex: none;
    display: flex;
    align-items: stretch;
    background: #dfe9f4;
    color: #1f3454;
}

.ribbon-tabs button {
    width: 54px;
    padding-top: 2px;
    border: 1px solid transparent;
    border-bottom: none;
}

.ribbon-tabs .file-menu {
    width: 55px;
    display: flex;
    align-items: center;
    justify-content: center;
    gap: 6px;
    padding: 0;
    margin: 1px 3px 1px 0;
    background: linear-gradient(#3b73b5, #1f5499 50%, #154581 52%, #387fc4);
}

.ribbon-tabs .active {
    background: #f8fbff;
    border-color: #b8c8dd;
    color: #2b2b71;
    border-radius: 2px 2px 0 0;
}

.ribbon-tabs .help {
    width: 19px;
    padding: 0;
    margin-left: auto;
}

.ribbon {
    height: 92px;
    flex: none;
    display: flex;
    padding: 3px 0 2px;
    background: linear-gradient(#f9fcff, #e2ebf7 40%, #dfe9f6 70%, #edf4fc);
    border-top: 1px solid #c7d6e8;
    border-bottom: 1px solid #a5b3c6;
}

.group {
    display: flex;
    flex-direction: column;
    align-items: center;
    justify-content: space-between;
    border-right: 1px solid #b8c7da;
    box-shadow: 1px 0 #fafdff;
}

.group-label {
    color: #75808e;
    line-height: 14px;
}

.clipboard {
    width: 76px;
}

.image,
.shapes {
    width: 83px;
}

.tools {
    width: 80px;
}

.brushes {
    width: 57px;
}

.size {
    width: 53px;
}

.colors {
    width: 357px;
}

.tools-row {
    display: flex;
    gap: 2px;
}

.clipboard .tools-row {
    gap: 0;
    padding-right: 5px;
}

.image .tools-row {
    padding-right: 9px;
}

.shapes .tools-row {
    padding-right: 7px;
}

.big {
    min-width: 46px;
    height: 66px;
    display: flex;
    flex-direction: column;
    align-items: center;
    border: 1px solid transparent;
    border-radius: 2px;
    color: #1e2e48;
}

.big .art {
    height: 37px;
    display: flex;
    align-items: center;
}

.drop {
    margin: 5px 0;
    border: 2px solid transparent;
    border-top: 3px solid #444f60;
    border-bottom: 0;
}

.big.selected {
    border-color: #c29b52;
    background: linear-gradient(#f8c878, #fdd27c 55%, #fbb949 56%, #fee27f);
}

.small-col {
    height: 64px;
    display: flex;
    flex-direction: column;
    align-items: center;
    gap: 7px;
    padding-top: 3px;
}

.small-col.three {
    align-items: flex-start;
}

.small-col button {
    display: flex;
    align-items: center;
    gap: 2px;
}

.dim {
    opacity: 0.7;
}

.tool-grid {
    display: grid;
    grid-template-columns: repeat(3, 23px);
    grid-auto-rows: 21px;
    row-gap: 8px;
    padding-top: 8px;
}

.tool-grid button {
    display: flex;
    align-items: center;
    justify-content: center;
    border: 1px solid #c6d1df;
    background: #f3f7fc;
}

.tool-grid .text-tool {
    font-family: "Liberation Serif", serif;
    font-size: 18px;
    font-weight: 700;
    color: #243650;
}

.big.color-choice {
    min-width: 42px;
}

.swatch-one {
    width: 32px;
    height: 32px;
    background: #000;
    border: 1px solid #c78b35;
    box-shadow: inset 0 0 0 1px #e9c894;
}

.swatch-two {
    width: 24px;
    height: 24px;
    background: #fff;
    border: 1px solid #8a98a9;
}

.colors .tools-row {
    gap: 0;
    padding-left: 1px;
}

.palette {
    display: grid;
    grid-template-columns: repeat(10, 20px);
    grid-auto-rows: 20px;
    gap: 2px;
    padding: 1px 0 0 1px;
}

.palette button {
    border: 1px solid #8e9cad;
    box-shadow: inset 0 0 0 1px #fff;
}

.palette .empty {
    border-color: #afbdcd;
    box-shadow: none;
}

.c-black { background: #000; }
.c-gray { background: #7f7f7f; }
.c-darkred { background: #880015; }
.c-red { background: #ed1c24; }
.c-orange { background: #ff7f27; }
.c-yellow { background: #fff200; }
.c-green { background: #22b14c; }
.c-turquoise { background: #00a2e8; }
.c-indigo { background: #3f48cc; }
.c-purple { background: #a349a4; }
.c-white { background: #fff; }
.c-lightgray { background: #c3c3c3; }
.c-brown { background: #b97a57; }
.c-rose { background: #ffaec9; }
.c-gold { background: #ffc90e; }
.c-lightyellow { background: #efe4b0; }
.c-lime { background: #b5e61d; }
.c-lightblue { background: #99d9ea; }
.c-bluegray { background: #7092be; }
.c-lavender { background: #c8bfe7; }

.rainbow {
    width: 29px;
    height: 29px;
    border: 1px solid #d6a6ae;
    background: linear-gradient(transparent, rgba(128, 128, 128, 0.7)), linear-gradient(90deg, #f33, #ef0 20%, #2d3 38%, #0ce 52%, #22e 68%, #d2e 85%, #e24);
}

.workspace {
    flex: 1;
    min-height: 0;
    display: flex;
    background: linear-gradient(#c5d0df, #cfdae7 40%, #dce6f1);
}

.canvas-area {
    flex: 1;
    padding: 5px 0 0 5px;
    overflow: hidden;
}

.canvas {
    position: relative;
    width: 614px;
    height: 460px;
    background: #fff;
    box-shadow: 5px 5px 3px #b0bfce;
}

.handle {
    position: absolute;
    right: -5px;
    top: 50%;
    width: 5px;
    height: 5px;
    margin-top: -2px;
    background: #fff;
    border: 1px solid #445;
}

.scrollbar {
    width: 16px;
    display: flex;
    flex-direction: column;
    background: #f2f1f2;
}

.scrollbar button {
    height: 17px;
    display: flex;
    align-items: center;
    justify-content: center;
}

.scroll-thumb {
    flex: 1;
    margin: 0 2px 32px 0;
    display: flex;
    flex-direction: column;
    align-items: center;
    justify-content: center;
    gap: 2px;
    border: 1px solid #999;
    border-radius: 2px;
    background: linear-gradient(90deg, #f6f6f6, #e9e9eb 48%, #d3d3d6 52%, #c4c4c7);
}

.scroll-thumb i {
    width: 7px;
    height: 1px;
    background: #555;
}

.status-bar {
    height: 26px;
    flex: none;
    display: flex;
    border-top: 1px solid #8d8d92;
    background: #f1edf0;
}

.status-bar div {
    flex: 1;
    display: flex;
    align-items: center;
    gap: 4px;
    padding-left: 5px;
    border-right: 1px solid #d7d3d6;
}

.status-bar div:nth-child(4) {
    flex: 0 0 118px;
}

.status-bar .zoom {
    flex: none;
    width: 217px;
    gap: 8px;
    padding-left: 20px;
    border: none;
}

.zoom input {
    width: 86px;
    height: 18px;
    margin: 0 3px 0 1px;
    appearance: none;
    background: linear-gradient(#b5b1b5, #b5b1b5) center / 100% 1px no-repeat;
}

.zoom input::-webkit-slider-thumb {
    appearance: none;
    width: 9px;
    height: 15px;
    border: 1px solid #666;
    border-radius: 2px 2px 4px 4px;
    background: linear-gradient(90deg, #fff, #ddd);
}

.zoom .grip {
    align-self: flex-end;
    margin-left: auto;
}

/* Taskbar */
.taskbar {
    height: 40px;
    flex: none;
    position: relative;
    display: flex;
    align-items: stretch;
    border-top: 1px solid #78acd3;
    outline: 1px solid #173c65;
    background: linear-gradient(225deg, transparent 46%, rgba(190, 225, 255, 0.7) 50%, transparent 54%) 705px 0 / 170px 40px no-repeat, linear-gradient(90deg, #34799e, #3689b5 25%, #2876b7 50%, #2269ad 74%, #1d5188 84%, #194b80);
}

.taskbar button {
    display: flex;
    align-items: center;
    justify-content: center;
}

.start {
    width: 54px;
}

.task {
    width: 59px;
    margin-right: 3px;
    border-radius: 3px;
}

.start + .task {
    margin: 0 3px 0 5px;
}

.task.running {
    border: 1px solid #c9e3ef;
    background: linear-gradient(135deg, rgba(230, 245, 250, 0.6), rgba(150, 195, 220, 0.35));
}

.task.stacked {
    width: 52px;
    margin-right: 9px;
    box-shadow: 2px 0 #3d82a8, 3px 0 #c9e3ef, 5px 0 #3d82a8, 6px 0 #8fc1da;
}

.task.active {
    border: 1px solid #e1f3fb;
    background: linear-gradient(135deg, #d7eaf4, #9bc9e1 60%, #b8def0);
}

.tray {
    margin-left: auto;
    display: flex;
    align-items: center;
    gap: 9px;
    color: #fff;
}

.tray .network {
    margin-left: 4px;
}

.tray .clock {
    margin: 0 4px 0 11px;
    line-height: 17px;
}

.tray .show-desktop {
    width: 14px;
    align-self: stretch;
    border: 1px solid #5580aa;
    background: linear-gradient(90deg, #34699b, #1b4b7d);
}
```
